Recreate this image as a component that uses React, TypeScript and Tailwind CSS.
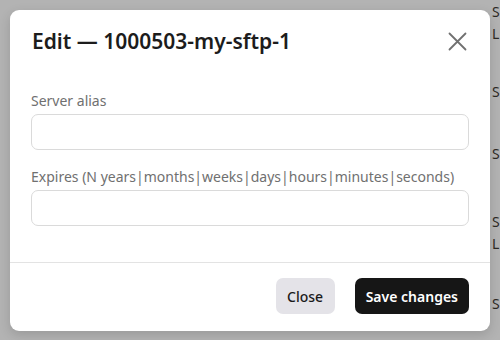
import React from 'react';

const font = { fontFamily: '"Noto Sans", "Open Sans", sans-serif' };

function Field({ label }: { label: string }) {
  return (
    <div className="flex flex-col">
      <label className="text-[14px] leading-[20px] text-[#707070] mb-[3px]">{label}</label>
      <input
        type="text"
        className="h-[36px] w-full rounded-[7px] border border-[#dadada] bg-white px-3 text-[14px] outline-none"
      />
    </div>
  );
}

export default function App() {
  return (
    <div className="relative w-[500px] h-[340px] overflow-hidden bg-[#b3b3b3]" style={font}>
      {/* page behind the overlay */}
      <div className="absolute left-[492px] top-0 flex flex-col text-[14px] leading-[22px] text-[#2e2a24]">
        <span className="mt-[1px]">S</span>
        <span>L</span>
        <span className="mt-[36px]">S</span>
        <span className="mt-[40px]">S</span>
        <span className="mt-[46px]">S</span>
        <span>L</span>
        <span className="mt-[38px]">S</span>
      </div>

      <div className="absolute left-[10px] top-[10px] w-[480px] rounded-[9px] bg-white shadow-[0_4px_12px_rgba(0,0,0,0.15)]">
        <div className="flex items-center justify-between pl-[22px] pr-[18px] pt-[16px]">
          <h2 className="text-[21px] leading-[30px] font-semibold text-[#1c1c1c]">Edit — 1000503-my-sftp-1</h2>
          <button type="button" className="flex h-[30px] w-[30px] items-center justify-center text-[#707070]">
            <svg width="19" height="19" viewBox="0 0 19 19" fill="none" stroke="currentColor" strokeWidth="1.8" strokeLinecap="round">
              <path d="M1.5 1.5 L17.5 17.5 M17.5 1.5 L1.5 17.5" />
            </svg>
          </button>
        </div>

        <div className="flex flex-col gap-[17px] px-[21px] pt-[35px] pb-[36px]">
          <Field label="Server alias" />
          <Field label="Expires (N years|months|weeks|days|hours|minutes|seconds)" />
        </div>

        <div className="flex justify-end gap-[20px] border-t border-[#e3e3e3] px-[21px] pt-[15px] pb-[17px]">
          <button
            type="button"
            className="h-[36px] rounded-[7px] bg-[#e4e3e8] px-[11.5px] text-[14px] font-medium text-[#1a1a1a]"
          >
            Close
          </button>
          <button
            type="button"
            className="h-[36px] rounded-[7px] bg-[#161616] px-[11px] text-[14px] font-semibold text-white"
          >
            Save changes
          </button>
        </div>
      </div>
    </div>
  );
}
